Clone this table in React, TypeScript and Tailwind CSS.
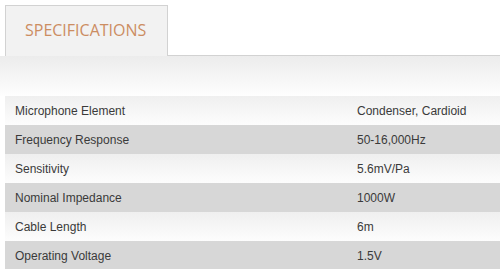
import React from "react";

const rows: [string, string][] = [
  ["Microphone Element", "Condenser, Cardioid"],
  ["Frequency Response", "50-16,000Hz"],
  ["Sensitivity", "5.6mV/Pa"],
  ["Nominal Impedance", "1000W"],
  ["Cable Length", "6m"],
  ["Operating Voltage", "1.5V"],
];

export default function App() {
  return (
    <div className="w-[500px] h-[269px] bg-white overflow-hidden">
      <div className="flex pt-[5px] pl-[5px]">
        <div className="w-[163px] h-[51px] border border-b-0 border-[#d2d2d2] bg-[#f2f2f2] pl-[19px] pt-[12px]">
          <span
            className="text-[16px] leading-[20px] text-[#cc8d62]"
            style={{ fontFamily: '"Open Sans", sans-serif' }}
          >
            SPECIFICATIONS
          </span>
        </div>
        <div className="flex-1 border-b border-[#d2d2d2]" />
      </div>
      <div className="h-[40px] bg-gradient-to-b from-[#ececec] to-[#fefefe]" />
      <div className="ml-[5px]" style={{ fontFamily: '"Liberation Sans", Arial, sans-serif' }}>
        {rows.map(([k, v], i) => (
          <div
            key={k}
            className={
              "flex h-[29px] items-center text-[12px] text-[#3a3a3a] " +
              (i % 2 === 0
                ? "bg-gradient-to-b from-[#efefef] to-[#fdfdfd]"
                : "bg-[#d7d7d7]")
            }
          >
            <div className="w-[352px] pl-[10px]">{k}</div>
            <div>{v}</div>
          </div>
        ))}
      </div>
    </div>
  );
}
